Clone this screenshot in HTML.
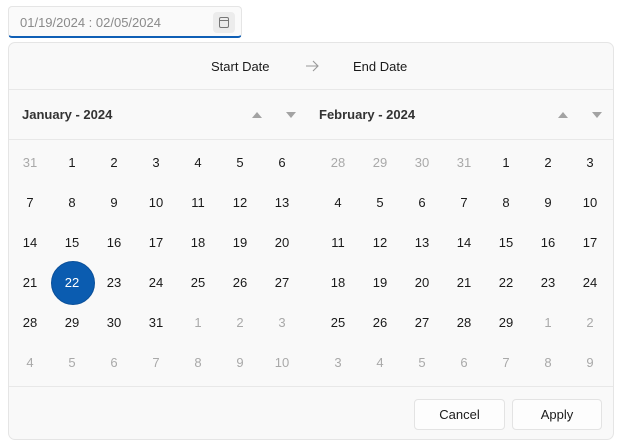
<!DOCTYPE html>
<html><head><style>
*{margin:0;padding:0;box-sizing:border-box}
body{width:618px;height:442px;background:#fff;font-family:"Segoe UI","Liberation Sans",sans-serif;font-size:13px;color:#1a1a1a;position:relative;overflow:hidden}
.inp{position:absolute;left:8px;top:6px;width:234px;height:32px;background:#fafafa;border:1px solid #e5e5e5;border-bottom:2px solid #0f5fb5;border-radius:4px}
.inp span{position:absolute;left:11px;top:8px;color:#8a8a8a;font-size:13px}
.ic{position:absolute;right:6px;top:5px;width:22px;height:21px;background:#ececec;border-radius:4px}
.ic i{position:absolute;left:6px;top:5px;width:10px;height:11px;border:1.2px solid #777;border-radius:2px}
.ic i:after{content:"";position:absolute;left:0;right:0;top:2px;border-top:1.2px solid #777}
.pop{position:absolute;left:8px;top:42px;width:606px;height:398px;background:#f9f9f9;border:1px solid #e5e5e5;border-radius:7px}
.hl{position:absolute;left:0;right:0;border-top:1px solid #e8e8e8}
.t{position:absolute;white-space:nowrap}
.g{position:absolute;display:grid;grid-template-columns:repeat(7,42px);grid-auto-rows:40px;top:99px}
.g span{display:flex;align-items:center;justify-content:center}
.o{color:#a9a9a9}
.sel{position:relative;color:#fff}
.sel:before{content:"";position:absolute;left:0;top:-1px;width:42px;height:42px;border-radius:50%;background:#0b5cb0;border:1px solid #0a4f99;z-index:0}
.sel b{position:relative;font-weight:normal}
.btn{position:absolute;top:356px;height:31px;background:#fdfdfd;border:1px solid #e3e3e3;border-radius:4px;display:flex;align-items:center;justify-content:center}
.tri{position:absolute;width:0;height:0;border-left:5px solid transparent;border-right:5px solid transparent}
.up{border-bottom:6px solid #a3a3a3}.dn{border-top:6px solid #a3a3a3}
</style></head><body>
<div class="inp"><span>01/19/2024 : 02/05/2024</span><div class="ic"><i></i></div></div>
<div class="pop">
<div class="t" style="left:202px;top:16px">Start Date</div>
<svg class="t" style="left:296px;top:17px" width="14" height="12" viewBox="0 0 14 12"><path d="M1 6H13M8 1L13 6L8 11" fill="none" stroke="#999" stroke-width="1.1"/></svg>
<div class="t" style="left:344px;top:16px">End Date</div>
<div class="hl" style="top:46px"></div>
<div class="t" style="left:13px;top:64px;font-weight:bold;color:#333">January - 2024</div>
<div class="tri up" style="left:243px;top:69px"></div>
<div class="tri dn" style="left:277px;top:69px"></div>
<div class="t" style="left:310px;top:64px;font-weight:bold;color:#333">February - 2024</div>
<div class="tri up" style="left:549px;top:69px"></div>
<div class="tri dn" style="left:583px;top:69px"></div>
<div class="hl" style="top:96px"></div>
<div class="g" style="left:0px">
<span class="o">31</span><span>1</span><span>2</span><span>3</span><span>4</span><span>5</span><span>6</span>
<span>7</span><span>8</span><span>9</span><span>10</span><span>11</span><span>12</span><span>13</span>
<span>14</span><span>15</span><span>16</span><span>17</span><span>18</span><span>19</span><span>20</span>
<span>21</span><span class="sel"><b>22</b></span><span>23</span><span>24</span><span>25</span><span>26</span><span>27</span>
<span>28</span><span>29</span><span>30</span><span>31</span><span class="o">1</span><span class="o">2</span><span class="o">3</span>
<span class="o">4</span><span class="o">5</span><span class="o">6</span><span class="o">7</span><span class="o">8</span><span class="o">9</span><span class="o">10</span>
</div>
<div class="g" style="left:308px">
<span class="o">28</span><span class="o">29</span><span class="o">30</span><span class="o">31</span><span>1</span><span>2</span><span>3</span>
<span>4</span><span>5</span><span>6</span><span>7</span><span>8</span><span>9</span><span>10</span>
<span>11</span><span>12</span><span>13</span><span>14</span><span>15</span><span>16</span><span>17</span>
<span>18</span><span>19</span><span>20</span><span>21</span><span>22</span><span>23</span><span>24</span>
<span>25</span><span>26</span><span>27</span><span>28</span><span>29</span><span class="o">1</span><span class="o">2</span>
<span class="o">3</span><span class="o">4</span><span class="o">5</span><span class="o">6</span><span class="o">7</span><span class="o">8</span><span class="o">9</span>
</div>
<div class="hl" style="top:343px"></div>
<div class="btn" style="left:405px;width:91px">Cancel</div>
<div class="btn" style="left:503px;width:90px">Apply</div>
</div>
</body></html>
